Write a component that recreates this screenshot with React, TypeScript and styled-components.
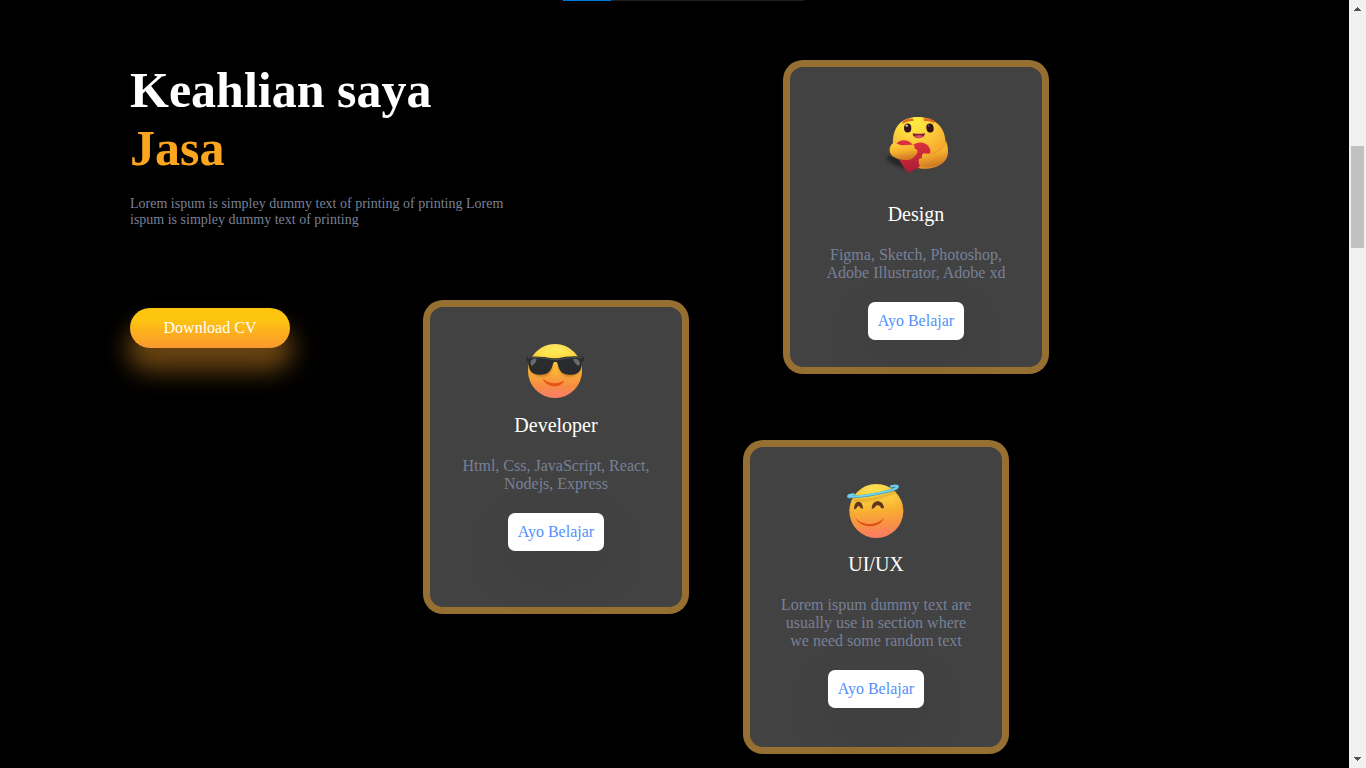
import React from 'react';
import styled, { createGlobalStyle } from 'styled-components';

const GlobalStyle = createGlobalStyle`
  * { box-sizing: border-box; }
  body {
    margin: 0;
    background: #000;
    overflow: hidden;
    font-family: 'Liberation Serif', 'Times New Roman', serif;
  }
`;

const Screen = styled.div`
  display: flex;
  width: 1366px;
  height: 768px;
  background: #000;
  overflow: hidden;
`;

const Page = styled.main`
  position: relative;
  flex: 1;
  display: flex;
  padding: 60px 0 0 130px;
`;

const ProgressTrack = styled.div`
  position: absolute;
  top: 0;
  left: 563px;
  width: 241px;
  height: 1px;
  background: #202020;
`;

const ProgressFill = styled.div`
  width: 48px;
  height: 1px;
  background: #0078d7;
`;

const LeftColumn = styled.section`
  display: flex;
  flex-direction: column;
  width: 559px;
  padding-top: 1px;
`;

const Heading = styled.h1<{ $accent?: boolean }>`
  margin: 0;
  font-size: 50px;
  line-height: 58px;
  font-weight: bold;
  color: ${(p) => (p.$accent ? '#fca61f' : '#fff')};
`;

const Intro = styled.p`
  width: 400px;
  height: 104px;
  margin: 19px 0 0;
  font-size: 14px;
  line-height: 16px;
  color: #788097;
`;

const ActionRow = styled.div`
  display: flex;
  align-items: flex-start;
  justify-content: space-between;
`;

const DownloadButton = styled.button`
  width: 160px;
  height: 40px;
  margin-top: 8px;
  padding: 0;
  border: none;
  border-radius: 34px;
  font: 16px 'Liberation Serif', 'Times New Roman', serif;
  color: #fff;
  background: linear-gradient(180deg, #fdc50f 26.71%, #fb982f 99.36%);
  box-shadow: 0 20px 24px 3px rgba(251, 161, 40, 0.42);
`;

const RightColumn = styled.section`
  display: flex;
  flex-direction: column;
  gap: 66px;
  margin-left: 54px;
`;

const CardFrame = styled.article<{ $indent?: number }>`
  display: flex;
  flex-direction: column;
  align-items: center;
  flex-shrink: 0;
  width: 266px;
  height: 314px;
  margin-left: ${(p) => p.$indent ?? 0}px;
  padding: 0 26px;
  border: 7px solid rgba(252, 166, 31, 0.45);
  border-radius: 20px;
  background: rgba(255, 255, 255, 0.26);
  text-align: center;
`;

const Emoji = styled.svg<{ $top: number; $bottom: number }>`
  display: block;
  flex-shrink: 0;
  width: 84px;
  height: 75px;
  margin: ${(p) => p.$top}px 0 ${(p) => p.$bottom}px;
`;

const CardTitle = styled.span`
  font-size: 20px;
  line-height: 23px;
  color: #fff;
`;

const CardText = styled.span`
  width: 200px;
  margin: 20px 0;
  font-size: 16px;
  line-height: 18px;
  color: #788097;
`;

const LearnButton = styled.button`
  width: 96px;
  height: 38px;
  padding: 0;
  border: none;
  border-radius: 7px;
  font: 16px 'Liberation Serif', 'Times New Roman', serif;
  color: #5290fd;
  background: #fff;
  box-shadow: 0 19px 60px rgba(0, 0, 0, 0.08);
`;

const Scrollbar = styled.aside`
  display: flex;
  flex-direction: column;
  align-items: center;
  width: 17px;
  height: 768px;
  padding: 7px 0;
  background: #f1f1f1;
`;

const Thumb = styled.div`
  width: 13px;
  height: 102px;
  margin: 135px 0 509px;
  background: #c1c1c1;
`;

const Arrow = styled.svg`
  display: block;
  width: 7px;
  height: 4px;
`;

const HugEmoji = () => (
  <Emoji $top={38} $bottom={23} viewBox="-3 0 252 225">
    <defs>
      <radialGradient id="hugFace" cx="0.38" cy="0.05" r="1">
        <stop offset="0" stopColor="#fff044" />
        <stop offset="0.35" stopColor="#fdd43c" />
        <stop offset="0.7" stopColor="#f8ac30" />
        <stop offset="1" stopColor="#e08a28" />
      </radialGradient>
      <linearGradient id="hugArm" x1="0" y1="0" x2="0.25" y2="1">
        <stop offset="0" stopColor="#ffd03a" />
        <stop offset="0.55" stopColor="#f6b02e" />
        <stop offset="1" stopColor="#d07a24" />
      </linearGradient>
      <linearGradient id="hugHeart" x1="0" y1="0" x2="0" y2="1">
        <stop offset="0" stopColor="#e23040" />
        <stop offset="1" stopColor="#a81d32" />
      </linearGradient>
      <filter id="hugSoft" x="-30%" y="-30%" width="160%" height="160%">
        <feGaussianBlur stdDeviation="5" />
      </filter>
    </defs>
    <path d="M32 158 Q48 143 75 158 L101 192 Q55 188 32 158Z" fill="#171717" opacity="0.6" filter="url(#hugSoft)" />
    <path d="M54 116 C52 62 84 36 128 36 C175 36 210 62 212 112 C222 140 220 162 203 174 C177 194 142 195 117 186 L59 157 C41 149 43 128 54 116Z" fill="url(#hugFace)" />
    <path d="M64 118 C72 101 102 101 114 121 C130 106 160 112 166 135 C166 155 155 165 137 168 L133 186 Q116 198 99 203 Q75 174 68 153Z" fill="url(#hugHeart)" />
    <path d="M49 119 C55 110 68 117 80 121 L106 119 C120 119 122 125 117 130 C131 133 131 145 120 152 C114 162 103 165 94 165 C77 165 58 158 50 149 C41 139 43 128 49 119Z" fill="url(#hugArm)" />
    <path d="M213 108 C219 122 222 147 214 160 C203 183 166 191 145 185 C135 183 129 176 132 170 C128 162 137 158 143 161 C137 153 143 140 152 146 C180 150 206 133 213 108Z" fill="url(#hugArm)" />
    <path d="M152 146 C179 150 203 136 212 112" fill="none" stroke="#e38a2a" strokeWidth="3" opacity="0.6" />
    <ellipse cx="98" cy="69" rx="11" ry="13.5" fill="#34121b" />
    <ellipse cx="165" cy="69" rx="11" ry="13.5" fill="#34121b" transform="rotate(-9 165 69)" />
    <circle cx="95" cy="62" r="3.6" fill="#dfcdb0" />
    <circle cx="161" cy="62" r="2.6" fill="#775361" />
    <path d="M81 54 C88 42 102 38 115 42 L116 48 C104 47 94 50 84 56Z" fill="#e36b20" />
    <path d="M145 41 C160 37 173 42 181 51 L176 54 C166 48 157 47 147 48Z" fill="#e36b20" />
    <path d="M114 85 Q131 88 149 85 C152 88 146 100 131 100 C117 100 111 89 114 85Z" fill="#812238" />
    <path d="M117 94 C125 90 138 90 145 94 C140 101 122 101 117 94Z" fill="#dc4e65" />
  </Emoji>
);

const CoolEmoji = () => (
  <Emoji $top={28} $bottom={4} viewBox="-3 0 252 225">
    <defs>
      <linearGradient id="coolFace" x1="0" y1="0" x2="0" y2="1">
        <stop offset="0" stopColor="#fff76c" />
        <stop offset="0.2" stopColor="#fee048" />
        <stop offset="0.5" stopColor="#fcb236" />
        <stop offset="0.78" stopColor="#f78c44" />
        <stop offset="1" stopColor="#fb7a72" />
      </linearGradient>
      <radialGradient id="coolEdge">
        <stop offset="0.78" stopColor="#ef912f" stopOpacity="0" />
        <stop offset="1" stopColor="#ef952e" stopOpacity="0.25" />
      </radialGradient>
      <filter id="coolSoft" x="-20%" y="-30%" width="140%" height="170%">
        <feGaussianBlur stdDeviation="4" />
      </filter>
    </defs>
    <circle cx="120" cy="108" r="81" fill="url(#coolFace)" />
    <circle cx="120" cy="108" r="81" fill="url(#coolEdge)" />
    <path d="M47 80 L114 80 Q110 126 77 124 Q49 124 47 80ZM128 80 L196 80 Q192 124 164 124 Q134 126 128 80Z" fill="#a45418" opacity="0.65" filter="url(#coolSoft)" />
    <path d="M33 66 C60 62 92 65 112 70 L129 70 C150 64 182 62 208 66 L206 77 L200 80 C200 104 194 119 169 119 C142 120 132 108 128 86 C126 78 116 78 114 86 C109 109 98 120 71 119 C46 118 41 103 41 81 L35 77Z" fill="#292b2d" />
    <path d="M38 69 C68 65 94 70 112 74 L128 74 C150 69 178 65 203 69" fill="none" stroke="#55585a" strokeWidth="2.5" />
    <path d="M46 81 C51 70 62 68 65 73 C64 82 57 89 49 93Z" fill="#777b7e" opacity="0.8" />
    <path d="M174 73 C184 68 194 74 195 86 L191 93 C183 89 177 82 174 73Z" fill="#777b7e" opacity="0.8" />
    <path d="M85 133 C100 148 128 150 146 138 C139 157 97 160 85 133Z" fill="#e65014" stroke="#e65014" strokeWidth="2" strokeLinejoin="round" />
  </Emoji>
);

const HaloEmoji = () => (
  <Emoji $top={28} $bottom={3} viewBox="-3 0 252 225">
    <defs>
      <linearGradient id="haloFace" x1="0.42" y1="0" x2="0.5" y2="1">
        <stop offset="0" stopColor="#fff05a" />
        <stop offset="0.22" stopColor="#fdd23f" />
        <stop offset="0.5" stopColor="#f8b033" />
        <stop offset="0.78" stopColor="#fa8e48" />
        <stop offset="1" stopColor="#fc7770" />
      </linearGradient>
      <radialGradient id="haloEdge">
        <stop offset="0.74" stopColor="#e9922f" stopOpacity="0" />
        <stop offset="1" stopColor="#e9922f" stopOpacity="0.25" />
      </radialGradient>
      <filter id="haloSoft" x="-10%" y="-100%" width="120%" height="300%">
        <feGaussianBlur stdDeviation="3" />
      </filter>
    </defs>
    <circle cx="124" cy="108" r="81" fill="url(#haloFace)" />
    <circle cx="124" cy="108" r="81" fill="url(#haloEdge)" />
    <path d="M55 76 Q119 80 183 48" fill="none" stroke="#c88b25" strokeWidth="7" opacity="0.6" filter="url(#haloSoft)" />
    <path d="M56 59 C38 60 34 68 49 66 C88 65 150 53 182 41 C195 34 186 30 168 35" fill="none" stroke="#459fb7" strokeWidth="8" strokeLinecap="round" />
    <path d="M56 58 C38 59 34 66 49 65 C88 64 150 52 182 40 C194 33 186 30 168 34" fill="none" stroke="#73d2e9" strokeWidth="5.5" strokeLinecap="round" />
    <path d="M57 103 C57 88 63 80 71 80 C79 80 84 89 84 101 Q79 101 76 98 C73 91 68 91 65 99 Q61 103 57 103Z" fill="#60351e" />
    <path d="M110 101 C111 86 119 79 128 79 C138 79 146 87 147 99 Q142 102 138 98 C133 89 124 89 120 97 Q115 102 110 101Z" fill="#60351e" />
    <path d="M61 129 C83 153 123 154 147 129 C134 161 79 163 61 129Z" fill="#dc4d14" />
  </Emoji>
);

interface CardProps {
  emoji: React.ReactNode;
  title: string;
  text: string;
  indent?: number;
}

const Card = ({ emoji, title, text, indent }: CardProps) => (
  <CardFrame $indent={indent}>
    {emoji}
    <CardTitle>{title}</CardTitle>
    <CardText>{text}</CardText>
    <LearnButton>Ayo Belajar</LearnButton>
  </CardFrame>
);

export default function App() {
  return (
    <>
      <GlobalStyle />
      <Screen>
        <Page>
          <ProgressTrack>
            <ProgressFill />
          </ProgressTrack>
          <LeftColumn>
            <Heading>Keahlian saya</Heading>
            <Heading as="h2" $accent>Jasa</Heading>
            <Intro>
              Lorem ispum is simpley dummy text of printing of printing Lorem
              ispum is simpley dummy text of printing
            </Intro>
            <ActionRow>
              <DownloadButton>Download CV</DownloadButton>
              <Card emoji={<CoolEmoji />} title="Developer" text="Html, Css, JavaScript, React, Nodejs, Express" />
            </ActionRow>
          </LeftColumn>
          <RightColumn>
            <Card emoji={<HugEmoji />} title="Design" text="Figma, Sketch, Photoshop, Adobe Illustrator, Adobe xd" indent={40} />
            <Card emoji={<HaloEmoji />} title="UI/UX" text="Lorem ispum dummy text are usually use in section where we need some random text" />
          </RightColumn>
        </Page>
        <Scrollbar>
          <Arrow viewBox="0 0 7 4" shapeRendering="crispEdges">
            <path d="M3 0h1v1h1v1h1v1h1v1H0V3h1V2h1V1h1z" fill="#505050" />
          </Arrow>
          <Thumb />
          <Arrow viewBox="0 0 7 4" shapeRendering="crispEdges">
            <path d="M0 0h7v1H6v1H5v1H4v1H3V3H2V2H1V1H0z" fill="#505050" />
          </Arrow>
        </Scrollbar>
      </Screen>
    </>
  );
}
